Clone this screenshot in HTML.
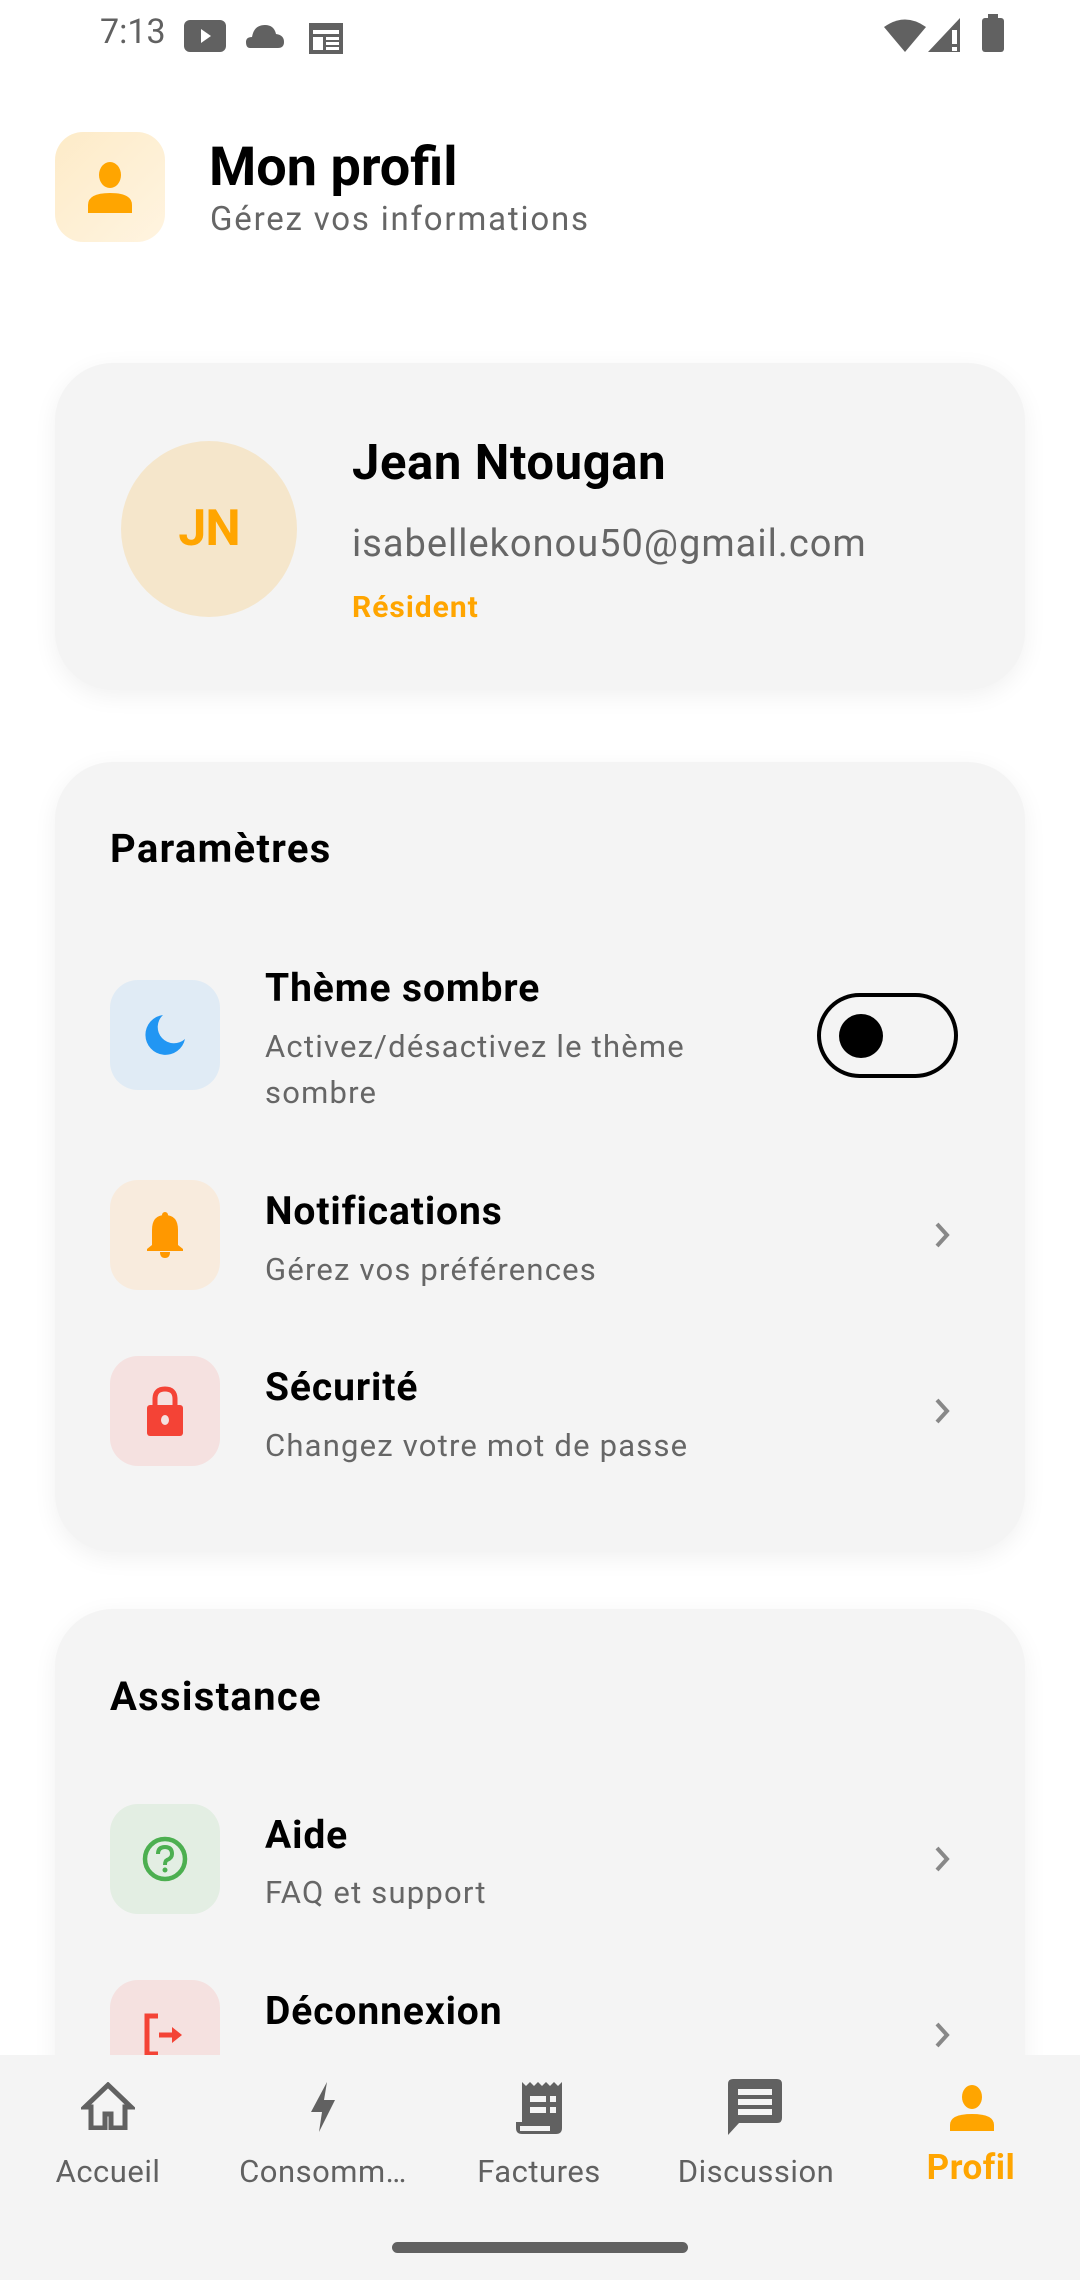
<!DOCTYPE html>
<html><head><meta charset="utf-8"><style>
*{margin:0;padding:0;box-sizing:border-box}
body{width:1080px;height:2280px;background:#fff;font-family:"Roboto","Liberation Sans",sans-serif;position:relative;overflow:hidden}
.a{position:absolute;white-space:nowrap}
.card{position:absolute;left:55px;width:970px;background:#f4f4f4;border-radius:58px;box-shadow:0 6px 24px rgba(0,0,0,0.06)}
.ib{position:absolute;left:110px;width:110px;height:110px;border-radius:28px;display:flex;align-items:center;justify-content:center}
.t{position:absolute;left:265px;font-size:39px;font-weight:bold;color:#000;letter-spacing:0.9px}
.s{position:absolute;left:265px;font-size:31px;color:#666;letter-spacing:1.2px}
.chev{position:absolute;left:932px}
.nl{position:absolute;top:2153px;font-size:31px;color:#616161;text-align:center;width:216px;letter-spacing:0.5px}
</style></head><body>
<!-- status bar -->
<div class="a" style="left:100px;top:12px;font-size:34px;color:#616161">7:13</div>
<svg class="a" style="left:184px;top:20px" width="42" height="32"><rect x="0" y="0" width="42" height="32" rx="6" fill="#616161"/><path d="M17 9 L27 16 L17 23Z" fill="#fff"/></svg>
<svg class="a" style="left:246px;top:22px" width="38" height="26"><path d="M4 26 Q0 26 0 20 Q0 15 6 15 Q8 3 19 3 Q28 3 30 12 Q38 13 38 20 Q38 26 32 26Z" fill="#616161"/></svg>
<svg class="a" style="left:308px;top:20px" width="36" height="34"><rect x="1" y="3" width="34" height="31" fill="#616161"/><rect x="5" y="10" width="26" height="4" fill="#fff"/><rect x="5" y="17" width="10" height="13" fill="#fff"/><rect x="18" y="17" width="13" height="3" fill="#fff"/><rect x="18" y="22" width="13" height="3" fill="#fff"/><rect x="18" y="27" width="13" height="3" fill="#fff"/></svg>
<svg class="a" style="left:884px;top:18px" width="42" height="34"><path d="M0 9 Q21 -6 42 9 L21 34Z" fill="#616161"/></svg>
<svg class="a" style="left:928px;top:18px" width="34" height="34"><path d="M32 0 L32 34 L0 34Z" fill="#616161"/><rect x="24" y="12" width="5" height="14" fill="#fff"/><rect x="24" y="29" width="5" height="4" fill="#fff"/></svg>
<svg class="a" style="left:982px;top:14px" width="22" height="38"><rect x="6" y="0" width="10" height="5" fill="#616161"/><rect x="0" y="4" width="22" height="34" rx="3" fill="#616161"/></svg>

<!-- header -->
<div class="a" style="left:55px;top:132px;width:110px;height:110px;border-radius:28px;background:linear-gradient(135deg,#fdebc8,#fff4e0)"></div>
<svg class="a" style="left:86px;top:161px" width="48" height="52" viewBox="0 0 48 52"><ellipse cx="24" cy="14" rx="11" ry="13" fill="#FFA500"/><path d="M2 52 L2 44 Q2 32 24 32 Q46 32 46 44 L46 52Z" fill="#FFA500"/></svg>
<div class="a" style="left:209px;top:136px;font-size:54px;font-weight:bold;color:#000;letter-spacing:0px">Mon profil</div>
<div class="a" style="left:210px;top:200px;font-size:33px;color:#666;letter-spacing:1.8px">Gérez vos informations</div>

<!-- profile card -->
<div class="card" style="top:363px;height:327px"></div>
<div class="a" style="left:121px;top:441px;width:176px;height:176px;border-radius:50%;background:#f5e6cb"></div>
<div class="a" style="left:121px;top:500px;width:176px;text-align:center;font-size:50px;font-weight:bold;color:#FFA500;letter-spacing:-1px">JN</div>
<div class="a" style="left:352px;top:434px;font-size:49px;font-weight:bold;color:#000;letter-spacing:0.6px">Jean Ntougan</div>
<div class="a" style="left:352px;top:522px;font-size:38px;color:#666;letter-spacing:1px">isabellekonou50@gmail.com</div>
<div class="a" style="left:352px;top:590px;font-size:30px;font-weight:bold;color:#FFA500;letter-spacing:1px">Résident</div>

<!-- parametres card -->
<div class="card" style="top:762px;height:790px"></div>
<div class="a" style="left:110px;top:825px;font-size:40px;font-weight:bold;color:#000;letter-spacing:1.3px">Paramètres</div>

<div class="ib" style="top:980px;background:#e0ebf5"><svg width="44" height="44" viewBox="0 0 44 44"><path d="M20 2 A20 20 0 1 0 42 26 A16 16 0 0 1 20 2Z" fill="#2196F3"/></svg></div>
<div class="t" style="top:965px">Thème sombre</div>
<div class="s" style="top:1028px">Activez/désactivez le thème</div>
<div class="s" style="top:1074px">sombre</div>
<div class="a" style="left:817px;top:993px;width:141px;height:85px;border:4px solid #000;border-radius:43px"></div>
<div class="a" style="left:839px;top:1014px;width:44px;height:44px;border-radius:50%;background:#000"></div>

<div class="ib" style="top:1180px;background:#f8ebdd"><svg width="40" height="46" viewBox="0 0 40 46"><rect x="17" y="0" width="6" height="6" rx="3" fill="#FF9800"/><path d="M20 3 Q7 3 7 18 L7 33 L2 37 L2 39 L38 39 L38 37 L33 33 L33 18 Q33 3 20 3Z" fill="#FF9800"/><path d="M15 40 L25 40 Q25 46 20 46 Q15 46 15 40Z" fill="#FF9800"/></svg></div>
<div class="t" style="top:1188px">Notifications</div>
<div class="s" style="top:1251px">Gérez vos préférences</div>
<svg class="chev" style="top:1220px" width="20" height="30"><path d="M5 4 L15 15 L5 26" stroke="#888" stroke-width="4" fill="none"/></svg>

<div class="ib" style="top:1356px;background:#f5e1e0"><svg width="40" height="50" viewBox="0 0 40 50"><path d="M10 20 L10 13 Q10 3 20 3 Q30 3 30 13 L30 20" stroke="#F44336" stroke-width="5" fill="none"/><rect x="2" y="19" width="36" height="31" rx="3" fill="#F44336"/><ellipse cx="20" cy="34" rx="4" ry="5" fill="#f5e1e0"/></svg></div>
<div class="t" style="top:1364px">Sécurité</div>
<div class="s" style="top:1427px">Changez votre mot de passe</div>
<svg class="chev" style="top:1396px" width="20" height="30"><path d="M5 4 L15 15 L5 26" stroke="#888" stroke-width="4" fill="none"/></svg>

<!-- assistance card -->
<div class="card" style="top:1609px;height:600px"></div>
<div class="a" style="left:110px;top:1673px;font-size:40px;font-weight:bold;color:#000;letter-spacing:1.3px">Assistance</div>

<div class="ib" style="top:1804px;background:#e3eee3"><svg width="48" height="48" viewBox="0 0 48 48"><circle cx="24" cy="24" r="20" stroke="#4CAF50" stroke-width="4.5" fill="none"/><path d="M17 19 Q17 12 24 12 Q31 12 31 19 Q31 23 26 25 Q24 26 24 30" stroke="#4CAF50" stroke-width="4" fill="none"/><circle cx="24" cy="35" r="2.5" fill="#4CAF50"/></svg></div>
<div class="t" style="top:1812px">Aide</div>
<div class="s" style="top:1874px">FAQ et support</div>
<svg class="chev" style="top:1844px" width="20" height="30"><path d="M5 4 L15 15 L5 26" stroke="#888" stroke-width="4" fill="none"/></svg>

<div class="ib" style="top:1980px;background:#f5e1e0"><svg width="46" height="46" viewBox="0 0 46 46"><path d="M16 4 L5 4 L5 42 L16 42" stroke="#F44336" stroke-width="5" fill="none"/><path d="M17 23 L34 23" stroke="#F44336" stroke-width="5"/><path d="M30 15 L40 23 L30 31Z" fill="#F44336"/></svg></div>
<div class="t" style="top:1988px">Déconnexion</div>
<svg class="chev" style="top:2020px" width="20" height="30"><path d="M5 4 L15 15 L5 26" stroke="#888" stroke-width="4" fill="none"/></svg>

<!-- bottom nav -->
<div class="a" style="left:0;top:2055px;width:1080px;height:225px;background:#f4f4f4"></div>
<svg class="a" style="left:81px;top:2082px" width="54" height="48" viewBox="0 0 54 48"><path d="M27 3 L4 25 L10 25 L10 46 L24 46 L24 32 L30 32 L30 46 L44 46 L44 25 L50 25Z" fill="none" stroke="#616161" stroke-width="5" stroke-linejoin="miter"/></svg>
<svg class="a" style="left:307px;top:2080px" width="32" height="54" viewBox="0 0 32 54"><path d="M20 2 L4 32 L15 32 L12 52 L28 20 L17 20Z" fill="#616161"/></svg>
<svg class="a" style="left:514px;top:2080px" width="52" height="56" viewBox="0 0 52 56"><path d="M8 2 L12 6 L16 2 L20 6 L24 2 L28 6 L32 2 L36 6 L40 2 L44 6 L48 2 L48 48 Q48 54 42 54 L8 54 Q2 54 2 48 L2 42 L8 42Z" fill="#616161"/><rect x="16" y="16" width="16" height="6" fill="#f4f4f4"/><rect x="36" y="16" width="6" height="6" fill="#f4f4f4"/><rect x="16" y="27" width="16" height="6" fill="#f4f4f4"/><rect x="36" y="27" width="6" height="6" fill="#f4f4f4"/><rect x="6" y="46" width="30" height="5" fill="#f4f4f4"/></svg>
<svg class="a" style="left:727px;top:2078px" width="56" height="58" viewBox="0 0 56 58"><path d="M6 1 L50 1 Q55 1 55 6 L55 40 Q55 45 50 45 L12 45 L1 57 L1 6 Q1 1 6 1Z" fill="#616161"/><rect x="11" y="11" width="34" height="6" fill="#f4f4f4"/><rect x="11" y="21" width="34" height="6" fill="#f4f4f4"/><rect x="11" y="31" width="34" height="6" fill="#f4f4f4"/></svg>
<svg class="a" style="left:949px;top:2085px" width="46" height="46" viewBox="0 0 46 46"><ellipse cx="23" cy="12" rx="10" ry="12" fill="#FFA500"/><path d="M1 46 L1 40 Q1 29 23 29 Q45 29 45 40 L45 46Z" fill="#FFA500"/></svg>
<div class="nl" style="left:0">Accueil</div>
<div class="nl" style="left:215px">Consomm…</div>
<div class="nl" style="left:431px">Factures</div>
<div class="nl" style="left:648px">Discussion</div>
<div class="nl" style="left:863px;top:2147px;font-size:35px;font-weight:bold;color:#FFA500;letter-spacing:0.5px">Profil</div>
<div class="a" style="left:392px;top:2242px;width:296px;height:11px;border-radius:6px;background:#616161"></div>
</body></html>
